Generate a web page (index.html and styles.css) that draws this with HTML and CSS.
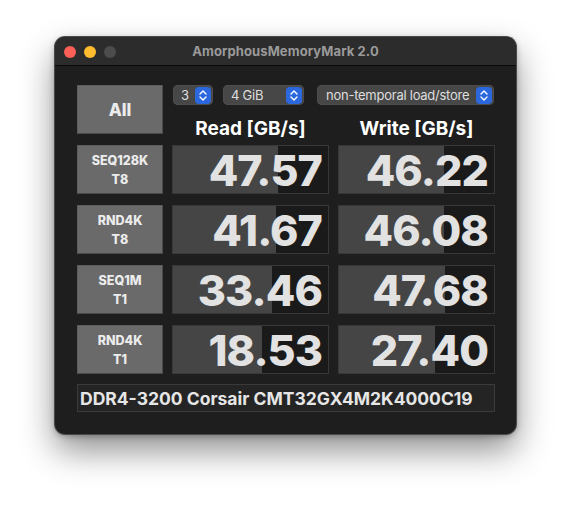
FILE: index.html
```html
<!DOCTYPE html>
<html>
<head>
<meta charset="utf-8">
<link rel="stylesheet" href="styles.css">
</head>
<body>
<div class="window">
  <div class="titlebar">
    <div class="lights">
      <span class="light red"></span>
      <span class="light yellow"></span>
      <span class="light gray"></span>
    </div>
    <div class="title">AmorphousMemoryMark 2.0</div>
  </div>
  <div class="content">
    <div class="grid">
      <div class="btn all">All</div>
      <div class="top">
        <div class="popups">
          <div class="popup p1"><span>3</span><svg class="step" viewBox="0 0 16 17"><rect x="0" y="0" width="16" height="17" rx="4" fill="#2b68dd"/><path d="M5 7 L8 4 L11 7 M5 10 L8 13 L11 10" fill="none" stroke="#fff" stroke-width="1.4" stroke-linecap="round" stroke-linejoin="round"/></svg></div>
          <div class="popup p2"><span>4 GiB</span><svg class="step" viewBox="0 0 16 17"><rect x="0" y="0" width="16" height="17" rx="4" fill="#2b68dd"/><path d="M5 7 L8 4 L11 7 M5 10 L8 13 L11 10" fill="none" stroke="#fff" stroke-width="1.4" stroke-linecap="round" stroke-linejoin="round"/></svg></div>
          <div class="popup p3"><span>non-temporal load/store</span><svg class="step" viewBox="0 0 16 17"><rect x="0" y="0" width="16" height="17" rx="4" fill="#2b68dd"/><path d="M5 7 L8 4 L11 7 M5 10 L8 13 L11 10" fill="none" stroke="#fff" stroke-width="1.4" stroke-linecap="round" stroke-linejoin="round"/></svg></div>
        </div>
        <div class="heads">
          <div class="head">Read [GB/s]</div>
          <div class="head">Write [GB/s]</div>
        </div>
      </div>

      <div class="btn label">SEQ128K<br>T8</div>
      <div class="cell"><div class="bar" style="width:105px"></div><span class="val">47.57</span></div>
      <div class="cell"><div class="bar" style="width:105px"></div><span class="val">46.22</span></div>

      <div class="btn label">RND4K<br>T8</div>
      <div class="cell"><div class="bar" style="width:103px"></div><span class="val">41.67</span></div>
      <div class="cell"><div class="bar" style="width:105px"></div><span class="val">46.08</span></div>

      <div class="btn label">SEQ1M<br>T1</div>
      <div class="cell"><div class="bar" style="width:99px"></div><span class="val">33.46</span></div>
      <div class="cell"><div class="bar" style="width:106px"></div><span class="val">47.68</span></div>

      <div class="btn label">RND4K<br>T1</div>
      <div class="cell"><div class="bar" style="width:89px"></div><span class="val">18.53</span></div>
      <div class="cell"><div class="bar" style="width:96px"></div><span class="val">27.40</span></div>

      <div class="field">DDR4-3200 Corsair CMT32GX4M2K4000C19</div>
    </div>
  </div>
</div>
</body>
</html>
```
FILE: styles.css
```css
html, body {
  margin: 0;
  padding: 0;
  background: #ffffff;
}
body {
  width: 572px;
  height: 508px;
  padding: 37px 0 0 55px;
  box-sizing: border-box;
  font-family: "Inter", "Liberation Sans", sans-serif;
}
.window {
  width: 461px;
  height: 397px;
  border-radius: 10px;
  background: #1e1e1e;
  box-shadow: 0 0 0 1px #4a4a4a, 0 16px 34px rgba(0,0,0,0.45), 0 2px 6px rgba(0,0,0,0.3);
  overflow: hidden;
  display: flex;
  flex-direction: column;
}
.titlebar {
  height: 28px;
  flex: none;
  background: #2c2c2c;
  border-bottom: 1px solid #0a0a0a;
  position: relative;
  display: flex;
  align-items: center;
  justify-content: center;
}
.lights {
  position: absolute;
  left: 9px;
  top: 9px;
  display: flex;
  gap: 8px;
}
.light {
  width: 12px;
  height: 12px;
  border-radius: 50%;
  display: block;
}
.red { background: #fe5f57; }
.yellow { background: #febc2e; }
.gray { background: #4c4c4c; }
.title {
  color: #9a9a9a;
  font-size: 13px;
  font-weight: 700;
  letter-spacing: 0.1px;
}
.content {
  padding: 19px 21px 0 22px;
}
.grid {
  display: grid;
  grid-template-columns: 86px 157px 157px;
  column-gap: 9px;
  row-gap: 11px;
}
.btn {
  background: #6a6a6a;
  border: 1px solid #5c5c5c;
  border-right-color: #4a4a4a;
  border-bottom-color: #4a4a4a;
  box-sizing: border-box;
  color: #ececec;
  font-weight: 800;
  display: flex;
  align-items: center;
  justify-content: center;
  text-align: center;
}
.all {
  height: 49px;
  font-size: 17px;
}
.label {
  height: 49px;
  font-size: 12.5px;
  line-height: 19px;
}
.top {
  grid-column: 2 / 4;
  display: flex;
  flex-direction: column;
}
.popups {
  display: flex;
  height: 20px;
}
.popup {
  height: 20px;
  box-sizing: border-box;
  background: #474747;
  border-radius: 5px;
  color: #dedede;
  font-size: 13px;
  letter-spacing: -0.25px;
  display: flex;
  align-items: center;
  justify-content: space-between;
  padding: 0 2px 0 8px;
  box-shadow: inset 0 0 0 0.5px #555;
}
.p1 { width: 40px; margin-left: 1px; }
.p2 { width: 81px; margin-left: 10px; }
.p3 { width: 177px; margin-left: 13px; padding-left: 9px; }
.step {
  width: 16px;
  height: 17px;
  display: block;
}
.heads {
  display: grid;
  grid-template-columns: 157px 157px;
  column-gap: 9px;
  height: 29px;
  align-items: center;
}
.head {
  color: #ffffff;
  font-size: 19px;
  font-weight: 700;
  text-align: center;
  padding-top: 12px;
}
.cell {
  height: 49px;
  box-sizing: border-box;
  border: 1px solid #383838;
  background: #1a1a1a;
  position: relative;
  display: flex;
  align-items: center;
  justify-content: flex-end;
  padding-right: 6px;
}
.bar {
  position: absolute;
  left: 0;
  top: 0;
  bottom: 0;
  background: #454545;
}
.val {
  position: relative;
  color: #e2e2e2;
  font-size: 43px;
  font-weight: 800;
  letter-spacing: -0.9px;
  line-height: 1;
  padding-top: 1px;
}
.field {
  grid-column: 1 / 4;
  height: 28px;
  box-sizing: border-box;
  border: 1px solid #3a3a3a;
  background: #242424;
  color: #e6e6e6;
  font-size: 17.5px;
  font-weight: 700;
  display: flex;
  align-items: center;
  padding-left: 2px;
  margin-top: -1px;
}
```
